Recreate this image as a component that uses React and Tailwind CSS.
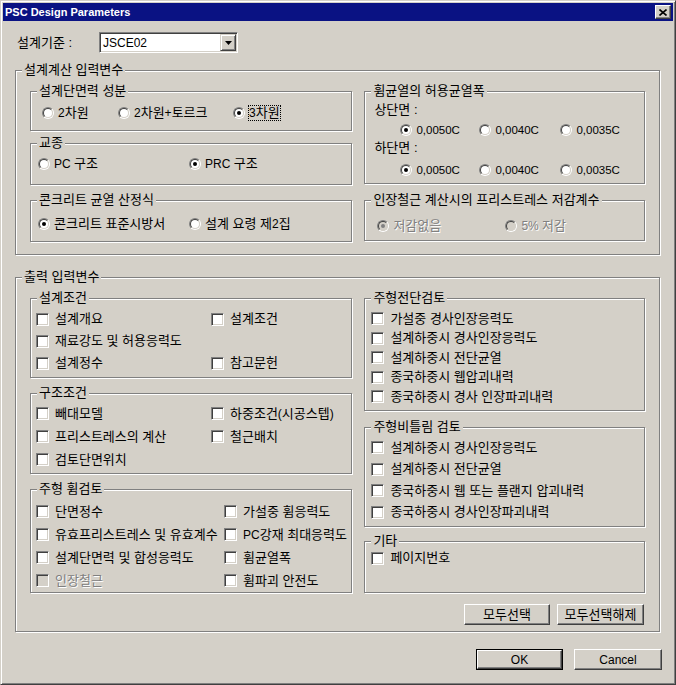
const FONT = "font-['Liberation_Sans','Noto_Sans_CJK_KR',sans-serif]"

function Group({ label, className = '', children }) {
  return (
    <div className={`relative border border-[#808080] shadow-[1px_1px_0_#fff,inset_1px_1px_0_#fff] ${className}`}>
      <span className="absolute -top-[8px] left-[6px] bg-[#d4d0c8] px-[2px] leading-[14px] whitespace-nowrap">
        {label}
      </span>
      {children}
    </div>
  )
}

// latin runs are set smaller, as the bitmap dialog font draws them narrower than hangul
function L({ children, className = 'text-[12px]' }) {
  return <span className={className}>{children}</span>
}

function Radio({ checked, disabled }) {
  return (
    <span className="inline-block h-[12px] w-[12px] shrink-0 rounded-full border border-t-[#808080] border-l-[#808080] border-r-white border-b-white">
      <span
        className={`flex h-full w-full items-center justify-center rounded-full border border-t-[#404040] border-l-[#404040] border-r-[#d4d0c8] border-b-[#d4d0c8] ${disabled ? 'bg-[#d4d0c8]' : 'bg-white'}`}
      >
        {checked && <span className={`h-[4px] w-[4px] rounded-full ${disabled ? 'bg-[#808080]' : 'bg-black'}`} />}
      </span>
    </span>
  )
}

function RadioItem({ checked, disabled, focus, className = '', children }) {
  return (
    <div className={`flex h-[14px] items-center gap-[4px] ${className}`}>
      <Radio checked={checked} disabled={disabled} />
      <span
        className={`whitespace-nowrap leading-[14px] ${disabled ? 'text-[#808080] [text-shadow:1px_1px_0_#fff]' : ''} ${focus ? 'outline-1 outline-offset-0 outline-dotted outline-black' : ''}`}
      >
        {children}
      </span>
    </div>
  )
}

function Check({ disabled, className = '', children }) {
  return (
    <div className={`flex items-center gap-[6px] ${className}`}>
      <span
        className={`h-[13px] w-[13px] shrink-0 border border-t-[#808080] border-l-[#808080] border-r-white border-b-white shadow-[inset_1px_1px_0_#404040,inset_-1px_-1px_0_#d4d0c8] ${disabled ? 'bg-[#d4d0c8]' : 'bg-white'}`}
      />
      <span className={`whitespace-nowrap leading-[14px] ${disabled ? 'text-[#808080] [text-shadow:1px_1px_0_#fff]' : ''}`}>
        {children}
      </span>
    </div>
  )
}

function Button({ def, className = '', children }) {
  const bevel =
    'flex h-full w-full items-center justify-center border border-t-white border-l-white border-r-[#404040] border-b-[#404040] shadow-[inset_-1px_-1px_0_#808080]'
  if (def) {
    return (
      <button className={`border border-black bg-[#d4d0c8] ${className}`}>
        <span className={bevel}>{children}</span>
      </button>
    )
  }
  return (
    <button className={`bg-[#d4d0c8] ${className}`}>
      <span className={bevel}>{children}</span>
    </button>
  )
}

function Cracks() {
  return (
    <div className="ml-[26px] flex">
      <RadioItem checked className="w-[79px]">
        <L className="text-[11.5px]">0,0050C</L>
      </RadioItem>
      <RadioItem className="w-[81px]">
        <L className="text-[11.5px]">0,0040C</L>
      </RadioItem>
      <RadioItem>
        <L className="text-[11.5px]">0,0035C</L>
      </RadioItem>
    </div>
  )
}

export default function App() {
  return (
    <div
      className={`${FONT} h-[685px] w-[676px] border border-t-[#d4d0c8] border-l-[#d4d0c8] border-r-[#404040] border-b-[#404040] bg-[#d4d0c8] p-[2px] text-[13px] text-black shadow-[inset_1px_1px_0_#fff,inset_-1px_-1px_0_#808080]`}
    >
      {/* title bar */}
      <div className="flex h-[18px] items-center justify-between bg-[#0a1283] pl-[2px] pr-[2px]">
        <span className="text-[11px] font-bold leading-none text-white">PSC Design Parameters</span>
        <button className="flex h-[14px] w-[16px] items-center justify-center border border-t-white border-l-white border-r-[#404040] border-b-[#404040] bg-[#d4d0c8] shadow-[inset_-1px_-1px_0_#808080]">
          <svg width="8" height="7" viewBox="0 0 8 7">
            <path d="M0.5 0.5 L7.5 6.5 M7.5 0.5 L0.5 6.5" stroke="#000" strokeWidth="1.6" fill="none" />
          </svg>
        </button>
      </div>

      <div className="pl-[12px]">
        {/* 설계기준 */}
        <div className="mt-[11px] flex h-[21px] items-center">
          <span className="ml-[2px] w-[82px]">설계기준 :</span>
          <div className="flex h-[21px] w-[139px] items-center border border-t-[#808080] border-l-[#808080] border-r-white border-b-white bg-white shadow-[inset_1px_1px_0_#404040,inset_-1px_-1px_0_#d4d0c8]">
            <span className="flex-1 pl-[3px] text-[12px] leading-[14px]">JSCE02</span>
            <span className="mr-[1px] flex h-[17px] w-[16px] items-center justify-center border border-t-[#d4d0c8] border-l-[#d4d0c8] border-r-[#404040] border-b-[#404040] bg-[#d4d0c8] shadow-[inset_1px_1px_0_#fff,inset_-1px_-1px_0_#808080]">
              <svg width="7" height="4" viewBox="0 0 7 4">
                <path d="M0 0 H7 L3.5 4 Z" fill="#000" />
              </svg>
            </span>
          </div>
        </div>

        {/* 설계계산 입력변수 */}
        <Group label="설계계산 입력변수" className="mt-[17px] h-[185px] w-[645px] px-[14px] pt-[20px]">
          <div className="flex gap-[12px]">
            <div className="flex w-[324px] flex-col">
              <Group label="설계단면력 성분" className="h-[40px] pl-[11px] pt-[14px]">
                <div className="flex">
                  <RadioItem className="w-[76px]">
                    <L>2</L>차원
                  </RadioItem>
                  <RadioItem className="w-[115px]">
                    <L>2</L>차원<L>+</L>토르크
                  </RadioItem>
                  <RadioItem checked focus>
                    <L>3</L>차원
                  </RadioItem>
                </div>
              </Group>
              <Group label="교종" className="mt-[12px] h-[42px] pl-[7px] pt-[13px]">
                <div className="flex">
                  <RadioItem className="w-[151px]">
                    <L>PC </L>구조
                  </RadioItem>
                  <RadioItem checked>
                    <L>PRC </L>구조
                  </RadioItem>
                </div>
              </Group>
              <Group label="콘크리트 균열 산정식" className="mt-[15px] h-[42px] pl-[7px] pt-[16px]">
                <div className="flex">
                  <RadioItem checked className="w-[151px]">
                    콘크리트 표준시방서
                  </RadioItem>
                  <RadioItem>
                    설계 요령 제<L>2</L>집
                  </RadioItem>
                </div>
              </Group>
            </div>

            <div className="flex w-[282px] flex-col">
              <Group label="휨균열의 허용균열폭" className="h-[93px] pl-[9px] pt-[11px]">
                <div className="h-[14px] leading-[14px]">상단면 :</div>
                <div className="mt-[6px]">
                  <Cracks />
                </div>
                <div className="mt-[4px] h-[14px] leading-[14px]">하단면 :</div>
                <div className="mt-[8px]">
                  <Cracks />
                </div>
              </Group>
              <Group label="인장철근 계산시의 프리스트레스 저감계수" className="mt-[16px] h-[41px] pl-[12px] pt-[18px]">
                <div className="flex">
                  <RadioItem checked disabled className="w-[128px]">
                    저감없음
                  </RadioItem>
                  <RadioItem disabled>
                    <L>5% </L>저감
                  </RadioItem>
                </div>
              </Group>
            </div>
          </div>
        </Group>

        {/* 출력 입력변수 */}
        <Group label="출력 입력변수" className="mt-[22px] h-[355px] w-[645px] px-[14px] pt-[20px]">
          <div className="flex gap-[12px]">
            <div className="flex w-[324px] flex-col">
              <Group label="설계조건" className="h-[80px] pl-[5px] pt-[9px]">
                <div className="flex h-[22px] items-center">
                  <Check className="w-[175px]">설계개요</Check>
                  <Check>설계조건</Check>
                </div>
                <div className="flex h-[22px] items-center">
                  <Check>재료강도 및 허용응력도</Check>
                </div>
                <div className="flex h-[22px] items-center">
                  <Check className="w-[175px]">설계정수</Check>
                  <Check>참고문헌</Check>
                </div>
              </Group>
              <Group label="구조조건" className="mt-[15px] h-[81px] pl-[5px] pt-[8px]">
                <div className="flex h-[23px] items-center">
                  <Check className="w-[175px]">빼대모델</Check>
                  <Check>
                    하중조건<L>(</L>시공스텝<L>)</L>
                  </Check>
                </div>
                <div className="flex h-[23px] items-center">
                  <Check className="w-[175px]">프리스트레스의 계산</Check>
                  <Check>철근배치</Check>
                </div>
                <div className="flex h-[23px] items-center">
                  <Check>검토단면위치</Check>
                </div>
              </Group>
              <Group label="주형 휨검토" className="mt-[15px] h-[104px] pl-[5px] pt-[10px]">
                <div className="flex h-[23px] items-center">
                  <Check className="w-[188px]">단면정수</Check>
                  <Check>가설중 휨응력도</Check>
                </div>
                <div className="flex h-[23px] items-center">
                  <Check className="w-[188px]">유효프리스트레스 및 유효계수</Check>
                  <Check>
                    <L>PC</L>강재 최대응력도
                  </Check>
                </div>
                <div className="flex h-[23px] items-center">
                  <Check className="w-[188px]">설계단면력 및 합성응력도</Check>
                  <Check>휨균열폭</Check>
                </div>
                <div className="flex h-[23px] items-center">
                  <Check disabled className="w-[188px]">
                    인장철근
                  </Check>
                  <Check>휨파괴 안전도</Check>
                </div>
              </Group>
            </div>

            <div className="flex w-[282px] flex-col">
              <Group label="주형전단검토" className="h-[113px] pl-[6px] pt-[10px]">
                <div className="flex h-[19.5px] items-center">
                  <Check>가설중 경사인장응력도</Check>
                </div>
                <div className="flex h-[19.5px] items-center">
                  <Check>설계하중시 경사인장응력도</Check>
                </div>
                <div className="flex h-[19.5px] items-center">
                  <Check>설계하중시 전단균열</Check>
                </div>
                <div className="flex h-[19.5px] items-center">
                  <Check>종국하중시 웹압괴내력</Check>
                </div>
                <div className="flex h-[19.5px] items-center">
                  <Check>종국하중시 경사 인장파괴내력</Check>
                </div>
              </Group>
              <Group label="주형비틀림 검토" className="mt-[16px] h-[100px] pl-[6px] pt-[9px]">
                <div className="flex h-[21.5px] items-center">
                  <Check>설계하중시 경사인장응력도</Check>
                </div>
                <div className="flex h-[21.5px] items-center">
                  <Check>설계하중시 전단균열</Check>
                </div>
                <div className="flex h-[21.5px] items-center">
                  <Check>종국하중시 웹 또는 플랜지 압괴내력</Check>
                </div>
                <div className="flex h-[21.5px] items-center">
                  <Check>종국하중시 경사인장파괴내력</Check>
                </div>
              </Group>
              <Group label="기타" className="mt-[14px] h-[52px] pl-[6px] pt-[6px]">
                <div className="flex h-[20px] items-center">
                  <Check>페이지번호</Check>
                </div>
              </Group>
              <div className="mt-[11px] flex justify-end gap-[7px] pr-[1px]">
                <Button className="h-[21px] w-[86px]">모두선택</Button>
                <Button className="h-[21px] w-[87px]">모두선택해제</Button>
              </div>
            </div>
          </div>
        </Group>
      </div>

      {/* OK / Cancel */}
      <div className="mt-[17px] flex justify-end gap-[11px] pr-[11px] text-[12px]">
        <Button def className="h-[21px] w-[87px]">
          OK
        </Button>
        <Button className="h-[21px] w-[88px]">Cancel</Button>
      </div>
    </div>
  )
}
